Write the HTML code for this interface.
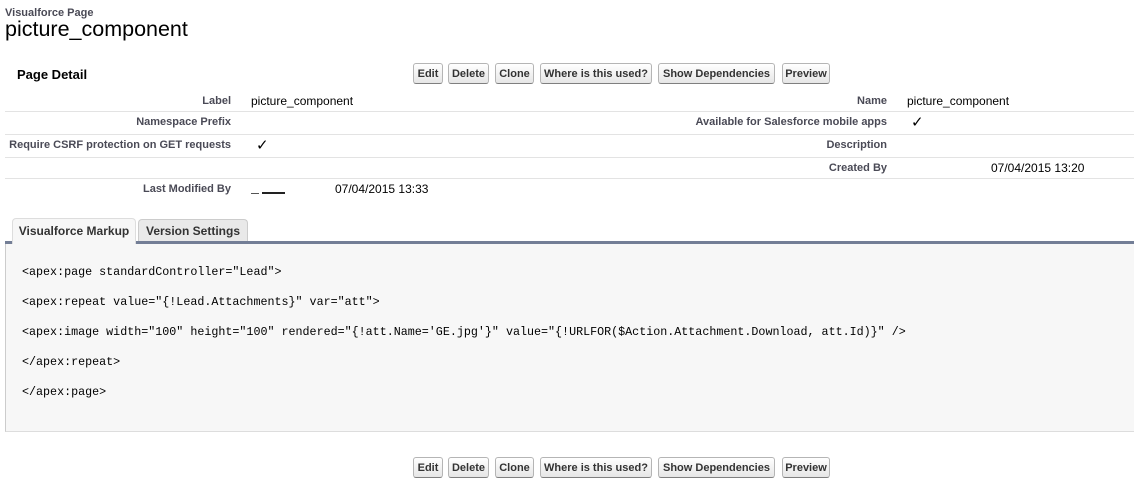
<!DOCTYPE html>
<html><head><style>
body{margin:0;width:1134px;height:485px;background:#fff;font-family:"Liberation Sans",Arial,sans-serif;position:relative;overflow:hidden;color:#000}
.a{position:absolute;white-space:nowrap}
.btn{position:absolute;height:21px;border:1px solid #b5b5b5;border-bottom-color:#7f7f7f;border-radius:3px;background:linear-gradient(#fff,#e6e6e6);font-size:11px;font-weight:bold;color:#333;line-height:20px;text-align:center;box-sizing:border-box}
.lbl{position:absolute;font-size:11px;font-weight:bold;color:#4a4a56;text-align:right;white-space:nowrap}
.val{position:absolute;font-size:12px;color:#000;white-space:nowrap}
.line{position:absolute;left:5px;right:0;height:1px;background:#e3e3e3}
.code{position:absolute;left:22px;font-family:"Liberation Mono",monospace;font-size:11.7px;color:#000;white-space:nowrap}
.chk{position:absolute;font-size:15px}
</style></head><body>
<div class="a" style="left:5px;top:7px;font-size:11px;font-weight:bold;color:#4a4a56">Visualforce Page</div>
<div class="a" style="left:5px;top:17px;font-size:21.5px;color:#000">picture_component</div>
<div class="a" style="left:17px;top:67px;font-size:13px;font-weight:bold">Page Detail</div>

<div class="btn" style="left:413px;top:63px;width:30px">Edit</div>
<div class="btn" style="left:448px;top:63px;width:41px">Delete</div>
<div class="btn" style="left:495px;top:63px;width:39px">Clone</div>
<div class="btn" style="left:540px;top:63px;width:112px">Where is this used?</div>
<div class="btn" style="left:658px;top:63px;width:117px">Show Dependencies</div>
<div class="btn" style="left:782px;top:63px;width:48px">Preview</div>

<div class="lbl" style="right:903px;top:95px">Label</div>
<div class="val" style="left:251px;top:94px">picture_component</div>
<div class="lbl" style="right:247px;top:95px">Name</div>
<div class="val" style="left:907px;top:94px">picture_component</div>
<div class="line" style="top:111px"></div>
<div class="lbl" style="right:903px;top:116px">Namespace Prefix</div>
<div class="lbl" style="right:247px;top:116px">Available for Salesforce mobile apps</div>
<div class="chk" style="left:911px;top:113px">✓</div>
<div class="line" style="top:134px"></div>
<div class="lbl" style="right:903px;top:139px">Require CSRF protection on GET requests</div>
<div class="chk" style="left:256px;top:136px">✓</div>
<div class="lbl" style="right:247px;top:139px">Description</div>
<div class="line" style="top:157px"></div>
<div class="lbl" style="right:247px;top:162px">Created By</div>
<div class="val" style="left:991px;top:161px">07/04/2015 13:20</div>
<div class="line" style="top:178px"></div>
<div class="lbl" style="right:903px;top:183px">Last Modified By</div>
<div class="a" style="left:251px;top:193px;width:8px;height:1px;background:#555"></div>
<div class="a" style="left:262px;top:192px;width:23px;height:2px;background:#222"></div>
<div class="val" style="left:335px;top:182px">07/04/2015 13:33</div>

<div class="a" style="left:12px;top:218px;width:124px;height:26px;background:#f7f7f7;border:1px solid #ddd;border-bottom:none;border-radius:4px 4px 0 0;box-sizing:border-box;font-size:12px;font-weight:bold;color:#333;line-height:24px;text-align:center;z-index:2">Visualforce Markup</div>
<div class="a" style="left:138px;top:219px;width:110px;height:24px;background:#e9e9e9;border:1px solid #ccc;border-bottom:none;border-radius:4px 4px 0 0;box-sizing:border-box;font-size:12px;font-weight:bold;color:#333;line-height:22px;text-align:center">Version Settings</div>
<div class="a" style="left:5px;top:241px;right:0;height:3px;background:#737e96"></div>
<div class="a" style="left:5px;top:244px;right:0;height:188px;background:#f7f7f7;border-left:1px solid #ccc;border-bottom:1px solid #ddd;box-sizing:border-box"></div>
<div class="code" style="top:265px">&lt;apex:page standardController="Lead"&gt;</div>
<div class="code" style="top:295px">&lt;apex:repeat value="{!Lead.Attachments}" var="att"&gt;</div>
<div class="code" style="top:325px">&lt;apex:image width="100" height="100" rendered="{!att.Name='GE.jpg'}" value="{!URLFOR($Action.Attachment.Download, att.Id)}" /&gt;</div>
<div class="code" style="top:355px">&lt;/apex:repeat&gt;</div>
<div class="code" style="top:385px">&lt;/apex:page&gt;</div>

<div class="btn" style="left:413px;top:457px;width:30px">Edit</div>
<div class="btn" style="left:448px;top:457px;width:41px">Delete</div>
<div class="btn" style="left:495px;top:457px;width:39px">Clone</div>
<div class="btn" style="left:540px;top:457px;width:112px">Where is this used?</div>
<div class="btn" style="left:658px;top:457px;width:117px">Show Dependencies</div>
<div class="btn" style="left:782px;top:457px;width:48px">Preview</div>
</body></html>
